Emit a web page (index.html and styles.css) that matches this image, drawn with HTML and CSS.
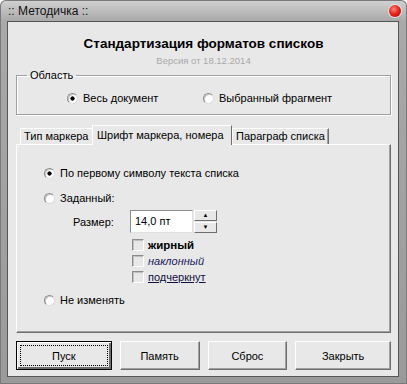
FILE: index.html
```html
<!DOCTYPE html>
<html lang="ru">
<head>
  <meta charset="UTF-8" />
  <title>:: Методичка ::</title>
  <link rel="stylesheet" href="styles.css">
</head>
<body>
  <div class="window">
    <div class="titlebar">
      <span class="caption">:: Методичка ::</span>
      <span class="close-dot"></span>
    </div>
    <div class="client">
      <h1>Стандартизация форматов списков</h1>
      <div class="version">Версия от 18.12.2014</div>

      <fieldset class="group">
        <legend>Область</legend>
        <div class="group-row">
          <label class="opt opt-first"><span class="radio checked"></span>Весь документ</label>
          <label class="opt"><span class="radio"></span>Выбранный фрагмент</label>
        </div>
      </fieldset>

      <div class="tabs">
        <div class="tab tab-first">Тип маркера</div>
        <div class="tab active">Шрифт маркера, номера</div>
        <div class="tab tab-last">Параграф списка</div>
      </div>
      <div class="panel">
        <label class="opt row-first"><span class="radio checked"></span>По первому символу текста списка</label>
        <label class="opt row-second"><span class="radio"></span>Заданный:</label>
        <div class="size-row">
          <span class="size-label">Размер:</span>
          <div class="field">14,0 пт</div>
          <div class="spin">
            <div class="spin-btn">&#9650;</div>
            <div class="spin-btn">&#9660;</div>
          </div>
        </div>
        <label class="check"><span class="box"></span><b>жирный</b></label>
        <label class="check"><span class="box"></span><i>наклонный</i></label>
        <label class="check"><span class="box"></span><u>подчеркнут</u></label>
        <label class="opt row-last"><span class="radio"></span>Не изменять</label>
      </div>

      <div class="buttons">
        <button class="btn btn-wide default"><span>Пуск</span></button>
        <button class="btn"><span>Память</span></button>
        <button class="btn"><span>Сброс</span></button>
        <button class="btn btn-wide"><span>Закрыть</span></button>
      </div>
    </div>
  </div>
</body>
</html>
```

FILE: styles.css
```css
body {
  margin: 0;
  background: #fff;
  font-family: 'Liberation Sans', Arial, sans-serif;
  font-size: 11px;
  color: #000;
}
.window {
  width: 407px;
  height: 384px;
  box-sizing: border-box;
  padding: 0 8px 7px 7px;
  border-radius: 6px 6px 0 0;
  background: linear-gradient(to bottom, #d2d2d2 0, #a9a9a9 21px, #9a9a9a 100%);
  box-shadow: inset 0 0 0 1px #7a7a7a;
}
.titlebar {
  height: 21px;
  display: flex;
  align-items: center;
  justify-content: space-between;
}
.caption {
  font-size: 12px;
  padding-left: 1px;
  color: #111;
}
.close-dot {
  width: 12px;
  height: 12px;
  border-radius: 50%;
  margin-right: -2px;
  background: radial-gradient(circle at 40% 35%, #ff8a80 0, #e8261b 45%, #a80d06 100%);
  box-shadow: 0 0 0 1px rgba(255,255,255,0.6);
}
.client {
  height: 356px;
  box-sizing: border-box;
  border: 1px solid #555;
  background: #e8e8e8;
  padding: 14px 7px 0 8px;
}
h1 {
  margin: 0;
  text-align: center;
  font-size: 13.5px;
  line-height: 16px;
  font-weight: bold;
}
.version {
  margin-top: 2px;
  text-align: center;
  font-size: 9.5px;
  line-height: 14px;
  color: #a9a9a9;
}
.group {
  margin: 0;
  padding: 0;
  height: 47px;
  box-sizing: border-box;
  border: 1px solid #a0a0a0;
  box-shadow: 1px 1px 0 #fff, inset 1px 1px 0 #fff;
}
.group legend {
  margin-left: 10px;
  padding: 0 3px;
  line-height: 14px;
}
.group-row {
  display: flex;
  padding: 6px 0 0 50px;
}
.opt {
  display: flex;
  align-items: center;
  height: 20px;
}
.opt-first {
  width: 136px;
}
.radio {
  width: 11px;
  height: 11px;
  box-sizing: border-box;
  border-radius: 50%;
  margin-right: 5px;
  border: 1px solid #8c8c8c;
  border-right-color: #dcdcdc;
  border-bottom-color: #dcdcdc;
  background: #fff;
  box-shadow: inset 1px 1px 0 #c8c8c8;
}
.radio.checked {
  background: radial-gradient(circle, #000 0, #000 1.8px, #fff 2.4px);
}
.tabs {
  display: flex;
  align-items: flex-end;
  margin-top: 9px;
  height: 20px;
  padding-left: 4px;
  position: relative;
  z-index: 1;
}
.tab {
  height: 15px;
  line-height: 15px;
  box-sizing: content-box;
  border-top: 1px solid #fff;
  border-left: 1px solid #fff;
  padding: 0 3px;
  white-space: nowrap;
}
.tab-first {
  width: 65px;
}
.active {
  height: 19px;
  line-height: 18px;
  width: 130px;
  padding: 0 4px;
  border-right: 1px solid #6e6e6e;
  margin-bottom: -1px;
  background: #e8e8e8;
}
.tab-last {
  width: 89px;
  border-right: 1px solid #6e6e6e;
  box-shadow: inset -1px 0 0 #a0a0a0;
}
.panel {
  height: 189px;
  box-sizing: border-box;
  border: 1px solid #fff;
  border-right-color: #6e6e6e;
  border-bottom-color: #6e6e6e;
  box-shadow: inset -1px -1px 0 #a0a0a0;
  padding: 18px 0 0 27px;
}
.row-second {
  margin-top: 5px;
}
.size-row {
  display: flex;
  align-items: center;
  margin-top: 2px;
  height: 23px;
}
.size-label {
  width: 57px;
  padding-left: 29px;
}
.field {
  width: 63px;
  height: 23px;
  box-sizing: border-box;
  border: 1px solid #8c8c8c;
  border-right-color: #e0e0e0;
  border-bottom-color: #e0e0e0;
  background: #fff;
  padding-left: 4px;
  line-height: 21px;
}
.spin {
  margin-left: 1px;
  display: flex;
  flex-direction: column;
}
.spin-btn {
  width: 23px;
  height: 11px;
  box-sizing: border-box;
  margin-bottom: 1px;
  border: 1px solid #fff;
  border-right-color: #6e6e6e;
  border-bottom-color: #6e6e6e;
  background: #e8e8e8;
  font-size: 6px;
  line-height: 9px;
  text-align: center;
}
.check {
  display: flex;
  align-items: center;
  height: 16px;
  padding-left: 88px;
}
.size-row + .check {
  margin-top: 4px;
}
.box {
  width: 12px;
  height: 12px;
  box-sizing: border-box;
  margin-right: 4px;
  border: 1px solid #8c8c8c;
  border-right-color: #fff;
  border-bottom-color: #fff;
  background: #e8e8e8;
  box-shadow: inset 1px 1px 0 #c0c0c0;
}
.check b {
  font-size: 11.5px;
}
.check i {
  color: #202060;
}
.check u {
  color: #101040;
}
.row-last {
  margin-top: 5px;
}
.buttons {
  display: flex;
  gap: 8px;
  margin-top: 8px;
}
.btn {
  width: 80px;
  height: 29px;
  box-sizing: border-box;
  margin: 0;
  padding: 0;
  font-family: inherit;
  font-size: 11px;
  color: #000;
  background: #e8e8e8;
  border: 1px solid #fff;
  border-right-color: #6e6e6e;
  border-bottom-color: #6e6e6e;
  box-shadow: inset -1px -1px 0 #a0a0a0;
}
.btn-wide {
  width: 96px;
}
.btn.default {
  border: 1px solid #000;
  box-shadow: inset 1px 1px 0 #fff, inset -2px -2px 0 #6e6e6e;
  padding: 3px;
}
.btn.default span {
  display: flex;
  align-items: center;
  justify-content: center;
  height: 100%;
  border: 1px dotted #000;
  box-sizing: border-box;
}
```
